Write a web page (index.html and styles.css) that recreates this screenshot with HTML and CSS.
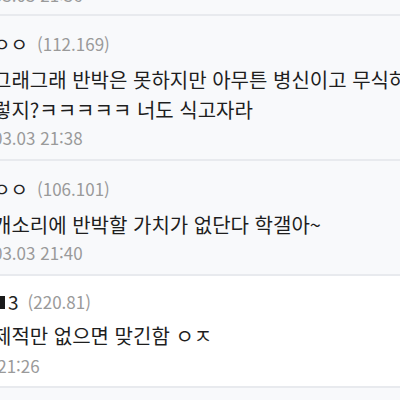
FILE: index.html
```html
<!DOCTYPE html>
<html lang="ko">
<head>
<meta charset="utf-8">
<title>댓글</title>
<link rel="stylesheet" href="styles.css">
</head>
<body>
<div class="list">
  <div class="cmt reply prev">
    <div class="inner"><div class="date">03.03 21:36</div></div>
  </div>
  <div class="cmt reply">
    <div class="inner">
      <div class="meta"><span class="nick">ㅇㅇ</span><span class="ip">(112.169)</span></div>
      <p class="txt">그래그래 반박은 못하지만 아무튼 병신이고 무식하고 그렇지?ㅋㅋㅋㅋㅋ 너도 식고자라</p>
      <div class="date">03.03 21:38</div>
    </div>
  </div>
  <div class="cmt reply">
    <div class="inner">
      <div class="meta"><span class="nick">ㅇㅇ</span><span class="ip">(106.101)</span></div>
      <p class="txt">개소리에 반박할 가치가 없단다 학갤아~</p>
      <div class="date">03.03 21:40</div>
    </div>
  </div>
  <div class="cmt main">
    <div class="inner">
      <div class="meta"><span class="nick nick-main"><span class="mark"></span>3</span><span class="ip">(220.81)</span></div>
      <p class="txt">제적만 없으면 맞긴함 ㅇㅈ</p>
      <div class="date date-main">03.03 21:26</div>
    </div>
  </div>
  <div class="cmt reply next"></div>
</div>
</body>
</html>
```
FILE: styles.css
```css
html {
  overflow: hidden;
}
body {
  margin: 0;
  font-family: "Noto Sans CJK KR", "Noto Sans", sans-serif;
  color: #222;
  background: #f8f9fb;
}
.list {
  width: 400px;
}
.cmt {
  padding: 16px 0 9px;
  border-bottom: 2px solid #e8eaee;
  background: #f8f9fb;
}
.cmt.prev {
  padding: 0 0 7px;
}
.cmt.prev .date {
  margin-top: -17px;
}
.cmt.main {
  background: #fff;
  padding: 14px 0 8px;
}
.cmt.next {
  height: 40px;
  padding: 0;
  border: 0;
}
.inner {
  margin-left: -7px;
  width: 474px;
}
.meta {
  display: flex;
  align-items: center;
  height: 24px;
  line-height: 24px;
}
.nick {
  font-size: 19px;
  color: #222;
}
.nick-main {
  display: flex;
  align-items: center;
  margin-left: 2px;
}
.mark {
  display: inline-block;
  width: 10px;
  height: 13px;
  background: #1a1a1a;
  margin-right: 3px;
}
.ip {
  font-size: 17px;
  color: #9a9a9a;
  margin-left: 9px;
}
.txt {
  margin: 9px 0 0;
  font-size: 20px;
  line-height: 30px;
  color: #1e1e1e;
}
.main .txt {
  margin-top: 7px;
}
.date {
  margin-top: 1px;
  font-size: 17px;
  line-height: 24px;
  color: #9a9a9a;
}
.date-main {
  margin-top: 3px;
  margin-left: -43px;
}
```
